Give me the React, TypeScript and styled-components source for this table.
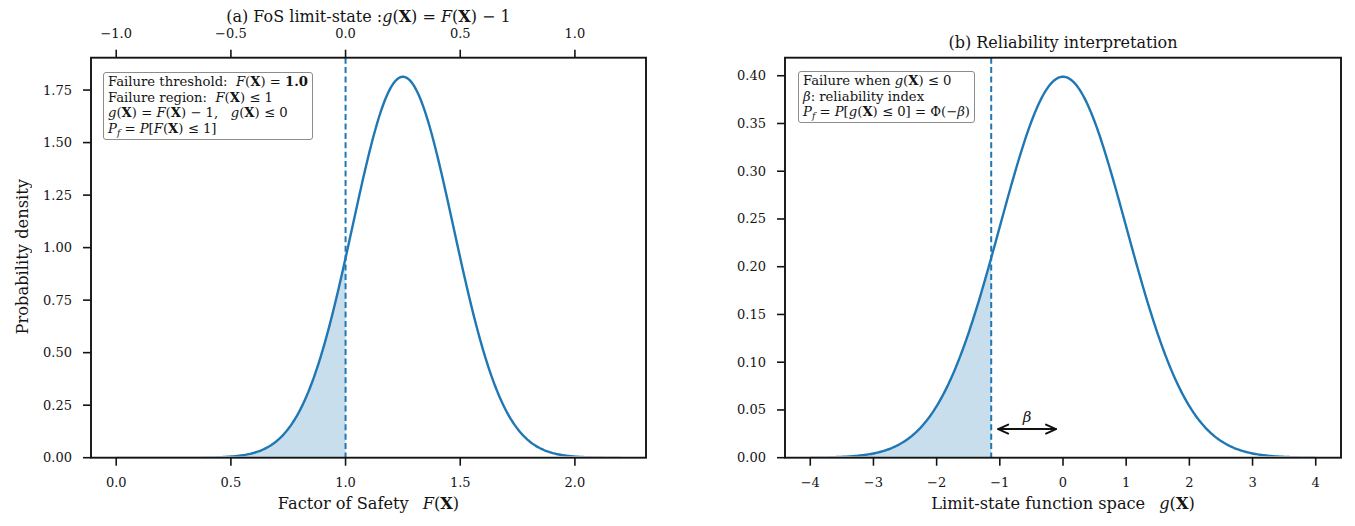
import React from "react";
import styled, { createGlobalStyle } from "styled-components";

const SERIF = `"DejaVu Serif", "Liberation Serif", serif`;
const BLUE = "#1f77b4";

const GlobalStyle = createGlobalStyle`
  html, body { margin: 0; padding: 0; background: #ffffff; }
  body { font-family: ${SERIF}; color: #141414; }
`;

const Figure = styled.main`
  display: flex;
  width: 1355px;
  height: 526px;
  background: #ffffff;
  overflow: hidden;
`;

const Panel = styled.section<{ $width: number; $padLeft: number }>`
  display: flex;
  width: ${(p) => p.$width}px;
  padding-left: ${(p) => p.$padLeft}px;
  box-sizing: border-box;
  flex: none;
`;

const YLabelCol = styled.div`
  width: 20px;
  display: flex;
  align-items: center;
  justify-content: center;
  padding-bottom: 12px;
  box-sizing: border-box;
`;

const YLabel = styled.div`
  writing-mode: vertical-rl;
  transform: rotate(180deg);
  font-size: 16.3px;
  white-space: nowrap;
`;

const Column = styled.div<{ $width: number }>`
  display: flex;
  flex-direction: column;
  width: ${(p) => p.$width}px;
`;

const Header = styled.header<{ $height: number; $inset: number; $span: number }>`
  height: ${(p) => p.$height}px;
  margin-left: ${(p) => p.$inset}px;
  width: ${(p) => p.$span}px;
  display: flex;
  align-items: flex-end;
  justify-content: center;
`;

const Title = styled.h2`
  margin: 0;
  font-size: 16px;
  font-weight: normal;
  line-height: 18px;
  white-space: nowrap;
`;

const ChartWrap = styled.div<{ $height: number }>`
  position: relative;
  height: ${(p) => p.$height}px;
`;

const XLabel = styled.div<{ $inset: number; $span: number }>`
  margin-left: ${(p) => p.$inset}px;
  width: ${(p) => p.$span}px;
  text-align: center;
  font-size: 16.2px;
  line-height: 20px;
  white-space: nowrap;
`;

const LabelGap = styled.span`
  display: inline-block;
  width: 14px;
`;

const Legend = styled.div<{ $left: number; $top: number }>`
  position: absolute;
  left: ${(p) => p.$left}px;
  top: ${(p) => p.$top}px;
  padding: 1px 4px 2px 4px;
  border: 1.5px solid #8c8c8c;
  border-radius: 3px;
  background: rgba(255, 255, 255, 0.9);
  font-size: 13.2px;
  line-height: 15.7px;
  white-space: nowrap;
`;

const LegendLine = styled.div``;

const Mi = styled.i`
  font-style: italic;
`;

const Mb = styled.b`
  font-weight: bold;
`;

const Sub = styled.sub`
  font-size: 0.7em;
  font-style: italic;
  vertical-align: -0.3em;
  line-height: 0;
`;

const Svg = styled.svg`
  display: block;
  overflow: visible;
`;

const TickLabel = styled.text`
  font-family: ${SERIF};
  font-size: 13px;
  fill: #141414;
`;

const TickMark = styled.line`
  stroke: #141414;
  stroke-width: 1.6;
`;

const Spine = styled.rect`
  fill: none;
  stroke: #141414;
  stroke-width: 1.9;
`;

const Curve = styled.path`
  fill: none;
  stroke: ${BLUE};
  stroke-width: 2.4;
  stroke-linejoin: round;
`;

const Shade = styled.path`
  fill: rgba(31, 119, 180, 0.24);
  stroke: none;
`;

const DashLine = styled.line`
  stroke: ${BLUE};
  stroke-width: 2;
  stroke-dasharray: 6 3.4;
`;

const ArrowStroke = styled.path`
  fill: none;
  stroke: #111;
  stroke-width: 1.9;
  stroke-linecap: round;
  stroke-linejoin: round;
`;

const AnnoText = styled.text`
  font-family: ${SERIF};
  font-size: 15px;
  font-style: italic;
  fill: #141414;
`;

type Tick = { v: number; label: string };
type Box = { left: number; top: number; w: number; h: number };

interface ChartProps {
  id: string;
  width: number;
  height: number;
  ax: Box;
  xlim: [number, number];
  ylim: [number, number];
  xticks: Tick[];
  yticks: Tick[];
  topTicks?: Tick[];
  mu: number;
  sigma: number;
  range: [number, number];
  threshold: number;
  arrow?: boolean;
}

const pdf = (x: number, mu: number, s: number) =>
  Math.exp(-0.5 * ((x - mu) / s) ** 2) / (s * Math.sqrt(2 * Math.PI));

const Chart: React.FC<ChartProps> = ({
  id,
  width,
  height,
  ax,
  xlim,
  ylim,
  xticks,
  yticks,
  topTicks,
  mu,
  sigma,
  range,
  threshold,
  arrow,
}) => {
  const sx = (v: number) => ax.left + ((v - xlim[0]) / (xlim[1] - xlim[0])) * ax.w;
  const sy = (v: number) => ax.top + ax.h - ((v - ylim[0]) / (ylim[1] - ylim[0])) * ax.h;
  const bottom = ax.top + ax.h;

  const N = 400;
  const pts: [number, number][] = [];
  for (let i = 0; i <= N; i++) {
    const x = range[0] + ((range[1] - range[0]) * i) / N;
    pts.push([sx(x), sy(pdf(x, mu, sigma))]);
  }
  const curveD = pts.map((p, i) => `${i ? "L" : "M"}${p[0].toFixed(2)},${p[1].toFixed(2)}`).join(" ");

  const fillPts: string[] = [];
  const M = 200;
  for (let i = 0; i <= M; i++) {
    const x = range[0] + ((threshold - range[0]) * i) / M;
    fillPts.push(`${sx(x).toFixed(2)},${sy(pdf(x, mu, sigma)).toFixed(2)}`);
  }
  const shadeD = `M${sx(range[0])},${bottom} L${fillPts.join(" L")} L${sx(threshold)},${bottom} Z`;

  const ay = sy(0.03);
  const ax1 = sx(threshold) + 7;
  const ax2 = sx(0) - 7;
  const clipId = `clip-${id}`;
  const lineClipId = `lineclip-${id}`;

  return (
    <Svg width={width} height={height} viewBox={`0 0 ${width} ${height}`}>
      <defs>
        <clipPath id={clipId}>
          <rect x={ax.left} y={ax.top} width={ax.w} height={ax.h} />
        </clipPath>
        <clipPath id={lineClipId}>
          <rect x={ax.left} y={ax.top} width={ax.w} height={ax.h - 1.4} />
        </clipPath>
      </defs>
      <g clipPath={`url(#${clipId})`}>
        <Shade d={shadeD} />
        <DashLine x1={sx(threshold)} x2={sx(threshold)} y1={ax.top} y2={bottom} />
      </g>
      <g clipPath={`url(#${lineClipId})`}>
        <Curve d={curveD} />
      </g>
      {arrow && (
        <g>
          <ArrowStroke d={`M${ax1},${ay} L${ax2},${ay}`} />
          <ArrowStroke d={`M${ax1 + 10},${ay - 4.5} L${ax1},${ay} L${ax1 + 10},${ay + 4.5}`} />
          <ArrowStroke d={`M${ax2 - 10},${ay - 4.5} L${ax2},${ay} L${ax2 - 10},${ay + 4.5}`} />
          <AnnoText x={(sx(threshold) + sx(0)) / 2} y={sy(0.043)} textAnchor="middle" dominantBaseline="central">
            β
          </AnnoText>
        </g>
      )}
      <Spine x={ax.left} y={ax.top} width={ax.w} height={ax.h} />
      {xticks.map((t) => (
        <g key={`x${t.label}`}>
          <TickMark x1={sx(t.v)} x2={sx(t.v)} y1={bottom} y2={bottom + 8} />
          <TickLabel x={sx(t.v)} y={bottom + 24.5} textAnchor="middle" dominantBaseline="central">
            {t.label}
          </TickLabel>
        </g>
      ))}
      {yticks.map((t) => (
        <g key={`y${t.label}`}>
          <TickMark x1={ax.left - 8} x2={ax.left} y1={sy(t.v)} y2={sy(t.v)} />
          <TickLabel x={ax.left - 19} y={sy(t.v)} textAnchor="end" dominantBaseline="central">
            {t.label}
          </TickLabel>
        </g>
      ))}
      {topTicks?.map((t) => (
        <g key={`t${t.label}`}>
          <TickMark x1={sx(t.v)} x2={sx(t.v)} y1={ax.top - 8} y2={ax.top} />
          <TickLabel x={sx(t.v)} y={ax.top - 24.5} textAnchor="middle" dominantBaseline="central">
            {t.label}
          </TickLabel>
        </g>
      ))}
    </Svg>
  );
};

const FX = () => (
  <>
    <Mi>F</Mi>(<Mb>X</Mb>)
  </>
);
const GX = () => (
  <>
    <Mi>g</Mi>(<Mb>X</Mb>)
  </>
);

const MU = 1.25;
const SIGMA = 0.22;
const BETA = (MU - 1) / SIGMA;

const leftX: Tick[] = [0, 0.5, 1, 1.5, 2].map((v) => ({ v, label: v.toFixed(1) }));
const leftY: Tick[] = [0, 0.25, 0.5, 0.75, 1, 1.25, 1.5, 1.75].map((v) => ({ v, label: v.toFixed(2) }));
const leftTop: Tick[] = [-1, -0.5, 0, 0.5, 1].map((g) => ({
  v: g + 1,
  label: (g < 0 ? "−" : "") + Math.abs(g).toFixed(1),
}));
const rightX: Tick[] = [-4, -3, -2, -1, 0, 1, 2, 3, 4].map((v) => ({
  v,
  label: (v < 0 ? "−" : "") + Math.abs(v).toString(),
}));
const rightY: Tick[] = [0, 0.05, 0.1, 0.15, 0.2, 0.25, 0.3, 0.35, 0.4].map((v) => ({
  v,
  label: v.toFixed(2),
}));

const peakL = pdf(MU, MU, SIGMA) * 1.05;
const peakR = pdf(0, 0, 1) * 1.05;

export default function App() {
  return (
    <>
      <GlobalStyle />
      <Figure>
        <Panel $width={700} $padLeft={12}>
          <YLabelCol>
            <YLabel>Probability density</YLabel>
          </YLabelCol>
          <Column $width={668}>
            <Header $height={26} $inset={59} $span={555}>
              <Title>
                (a) FoS limit-state :<GX /> = <FX /> − 1
              </Title>
            </Header>
            <ChartWrap $height={468}>
              <Chart
                id="a"
                width={668}
                height={468}
                ax={{ left: 59, top: 31.7, w: 555, h: 400 }}
                xlim={[-0.11, 2.31]}
                ylim={[0, peakL]}
                xticks={leftX}
                yticks={leftY}
                topTicks={leftTop}
                mu={MU}
                sigma={SIGMA}
                range={[0, 2.2]}
                threshold={1}
              />
              <Legend $left={71} $top={46}>
                <LegendLine>
                  Failure threshold:&nbsp; <FX /> = <Mb>1.0</Mb>
                </LegendLine>
                <LegendLine>
                  Failure region:&nbsp; <FX /> ≤ 1
                </LegendLine>
                <LegendLine>
                  <GX /> = <FX /> − 1,&nbsp;&nbsp; <GX /> ≤ 0
                </LegendLine>
                <LegendLine>
                  <Mi>P</Mi>
                  <Sub>f</Sub> = <Mi>P</Mi>[<FX /> ≤ 1]
                </LegendLine>
              </Legend>
            </ChartWrap>
            <XLabel $inset={59} $span={555}>
              Factor of Safety
              <LabelGap />
              <FX />
            </XLabel>
          </Column>
        </Panel>
        <Panel $width={655} $padLeft={0}>
          <Column $width={655}>
            <Header $height={52} $inset={85} $span={556}>
              <Title>(b) Reliability interpretation</Title>
            </Header>
            <ChartWrap $height={442}>
              <Chart
                id="b"
                width={655}
                height={442}
                ax={{ left: 85, top: 5.7, w: 556, h: 400 }}
                xlim={[-4.4, 4.4]}
                ylim={[0, peakR]}
                xticks={rightX}
                yticks={rightY}
                mu={0}
                sigma={1}
                range={[-4, 4]}
                threshold={-BETA}
                arrow
              />
              <Legend $left={98} $top={19}>
                <LegendLine>
                  Failure when <GX /> ≤ 0
                </LegendLine>
                <LegendLine>
                  <Mi>β</Mi>: reliability index
                </LegendLine>
                <LegendLine>
                  <Mi>P</Mi>
                  <Sub>f</Sub> = <Mi>P</Mi>[<GX /> ≤ 0] = Φ(−<Mi>β</Mi>)
                </LegendLine>
              </Legend>
            </ChartWrap>
            <XLabel $inset={85} $span={556}>
              Limit-state function space
              <LabelGap />
              <GX />
            </XLabel>
          </Column>
        </Panel>
      </Figure>
    </>
  );
}
